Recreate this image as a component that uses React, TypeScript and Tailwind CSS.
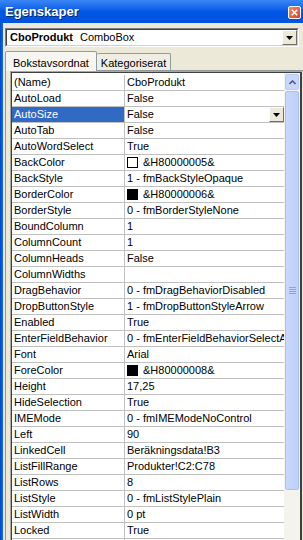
import React from 'react';

type Row = { name: string; value: string; swatch?: 'white' | 'black' };

const ROWS: Row[] = [
  { name: '(Name)', value: 'CboProdukt' },
  { name: 'AutoLoad', value: 'False' },
  { name: 'AutoSize', value: 'False' },
  { name: 'AutoTab', value: 'False' },
  { name: 'AutoWordSelect', value: 'True' },
  { name: 'BackColor', value: '&H80000005&', swatch: 'white' },
  { name: 'BackStyle', value: '1 - fmBackStyleOpaque' },
  { name: 'BorderColor', value: '&H80000006&', swatch: 'black' },
  { name: 'BorderStyle', value: '0 - fmBorderStyleNone' },
  { name: 'BoundColumn', value: '1' },
  { name: 'ColumnCount', value: '1' },
  { name: 'ColumnHeads', value: 'False' },
  { name: 'ColumnWidths', value: '' },
  { name: 'DragBehavior', value: '0 - fmDragBehaviorDisabled' },
  { name: 'DropButtonStyle', value: '1 - fmDropButtonStyleArrow' },
  { name: 'Enabled', value: 'True' },
  { name: 'EnterFieldBehavior', value: '0 - fmEnterFieldBehaviorSelectAll' },
  { name: 'Font', value: 'Arial' },
  { name: 'ForeColor', value: '&H80000008&', swatch: 'black' },
  { name: 'Height', value: '17,25' },
  { name: 'HideSelection', value: 'True' },
  { name: 'IMEMode', value: '0 - fmIMEModeNoControl' },
  { name: 'Left', value: '90' },
  { name: 'LinkedCell', value: 'Beräkningsdata!B3' },
  { name: 'ListFillRange', value: 'Produkter!C2:C78' },
  { name: 'ListRows', value: '8' },
  { name: 'ListStyle', value: '0 - fmListStylePlain' },
  { name: 'ListWidth', value: '0 pt' },
  { name: 'Locked', value: 'True' },
  // next row only peeks in below the window edge
  { name: '', value: '' },
];

function DropButton() {
  // classic 3D beige drop-down button with small black triangle
  return (
    <div className="w-[15px] h-[15px] bg-[#ece9d8] border border-t-white border-l-white border-r-[#716f64] border-b-[#716f64] flex items-center justify-center">
      <svg width="7" height="4" viewBox="0 0 7 4">
        <path d="M0 0h7L3.5 4z" fill="#000" />
      </svg>
    </div>
  );
}

function PropRow({ row, selected }: { row: Row; selected: boolean }) {
  return (
    <div className="flex h-[16px] border-b border-[#c0c0c0]">
      <div
        className={`w-[113px] shrink-0 border-r border-[#c0c0c0] pl-[2px] leading-[15px] whitespace-nowrap overflow-hidden ${
          selected ? 'bg-[#316ac5] text-white' : ''
        }`}
      >
        {row.name}
      </div>
      <div className="flex-1 flex items-center pl-[2px] whitespace-nowrap overflow-hidden min-w-0">
        {row.swatch && (
          <span
            className={`w-[11px] h-[11px] border border-black shrink-0 mr-[5px] ${
              row.swatch === 'black' ? 'bg-black' : 'bg-white'
            }`}
          />
        )}
        <span className="flex-1 overflow-hidden leading-[15px]">{row.value}</span>
        {selected && <DropButton />}
      </div>
    </div>
  );
}

export default function App() {
  return (
    <div className="w-[303px] h-[540px] overflow-hidden bg-[#ece9d8] flex flex-col font-['Liberation_Sans',Arial,sans-serif] text-[11px] text-black">
      {/* title bar */}
      <div className="h-[23px] shrink-0 flex items-center justify-between pl-[5px] pr-[2px] bg-gradient-to-b from-[#3b86f6] via-[#0058e6] to-[#0053dc]">
        <span className="text-white font-bold text-[13px] [text-shadow:1px_1px_0_#0a246a]">Egenskaper</span>
        <div className="w-[13px] h-[13px] mt-[1px] rounded-[2px] border border-white bg-gradient-to-br from-[#f08a6a] to-[#d6401c] flex items-center justify-center">
          <svg width="7" height="7" viewBox="0 0 7 7">
            <path d="M0.8 0.8L6.2 6.2M6.2 0.8L0.8 6.2" stroke="#fff" strokeWidth="1.6" />
          </svg>
        </div>
      </div>

      <div className="flex flex-1 min-h-0">
        <div className="w-[3px] shrink-0 bg-gradient-to-r from-[#0048c8] to-[#166aee]" />
        <div className="flex-1 flex flex-col min-w-0 pl-[2px] pt-[5px]">
          {/* object combobox, sunken */}
          <div className="h-[19px] mr-[4px] border border-t-[#808080] border-l-[#808080] border-r-white border-b-white">
            <div className="h-full flex items-center bg-white border border-t-[#404040] border-l-[#404040] border-r-[#d4d0c8] border-b-[#d4d0c8] pl-[3px]">
              <span className="font-bold">CboProdukt</span>
              <span className="ml-[7px]">ComboBox</span>
              <span className="flex-1" />
              <DropButton />
            </div>
          </div>

          {/* tabs */}
          <div className="flex items-end h-[20px] mt-[3px]">
            <div className="h-[20px] px-[7px] pt-[3px] bg-[#f7f6f1] border border-b-0 border-[#919b9c] rounded-t-[2px] relative z-10 -mb-px">
              Bokstavsordnat
            </div>
            <div className="h-[17px] px-[4px] pt-[1px] bg-[#efede4] border border-b-0 border-l-0 border-[#919b9c] rounded-t-[2px]">
              Kategoriserat
            </div>
          </div>

          {/* tab panel */}
          <div className="flex-1 min-h-0 bg-[#ece9d8] border-t border-l border-[#919b9c] pl-[4px]">
            <div className="h-full mr-[1px] border-l border-t border-[#aca899] flex">
              <div className="flex-1 min-w-0 flex border-l border-t border-[#404040] border-r-2 border-r-[#404040]">
                <div className="flex-1 min-w-0 bg-white pt-[2px]">
                  {ROWS.map((r, i) => (
                    <PropRow key={i} row={r} selected={r.name === 'AutoSize'} />
                  ))}
                </div>
                {/* scrollbar */}
                <div className="w-[16px] shrink-0 bg-[#f4f3ee] flex flex-col pt-[1px]">
                  <div className="h-[16px] mx-[1px] rounded-[2px] border border-[#b7cbf5] bg-[#c6d7fb] flex items-center justify-center">
                    <svg width="7" height="5" viewBox="0 0 7 5">
                      <path d="M0.5 4L3.5 1L6.5 4" stroke="#4d6185" strokeWidth="1.6" fill="none" />
                    </svg>
                  </div>
                  <div className="h-[399px] mt-[1px] mx-[1px] rounded-[2px] border border-[#a9bff2] bg-gradient-to-r from-[#c9d8fc] to-[#bcd0fa] flex items-center justify-center">
                    <div className="flex flex-col gap-[1px]">
                      <div className="w-[7px] h-[1px] bg-[#8ca6e4]" />
                      <div className="w-[7px] h-[1px] bg-[#8ca6e4]" />
                      <div className="w-[7px] h-[1px] bg-[#8ca6e4]" />
                      <div className="w-[7px] h-[1px] bg-[#8ca6e4]" />
                    </div>
                  </div>
                </div>
              </div>
            </div>
          </div>
        </div>
      </div>
    </div>
  );
}
